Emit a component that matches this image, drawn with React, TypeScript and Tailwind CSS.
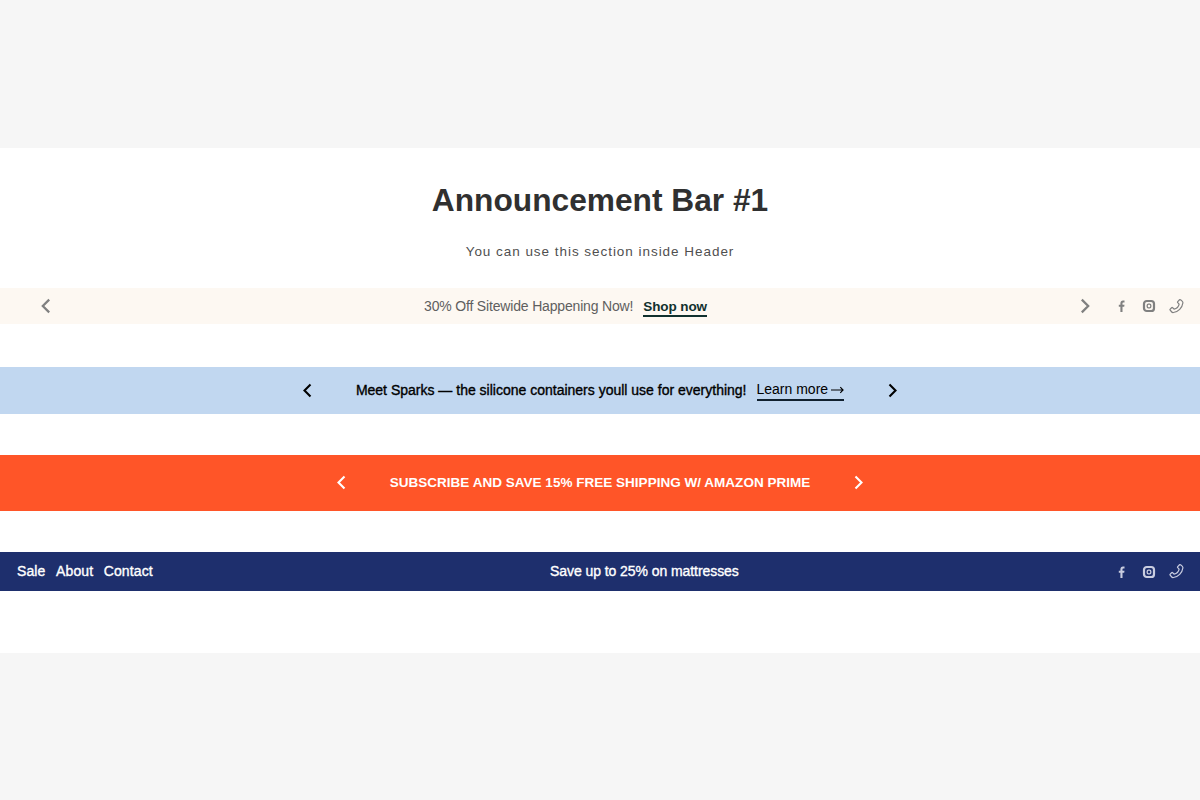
import React from "react";

function Chevron({ dir, className }: { dir: "l" | "r"; className: string }) {
  return (
    <svg viewBox="0 0 12 20" className={className} fill="none" stroke="currentColor" strokeWidth="2.800">
      <path d={dir === "l" ? "M10 2 2 10l8 8" : "M2 2l8 8-8 8"} />
    </svg>
  );
}

function Social({ color }: { color: string }) {
  return (
    <div className={`flex items-center gap-[13px] ${color}`}>
      <svg viewBox="0 0 14 14" className="w-[14px] h-[14px]" fill="currentColor">
        <path d="M5.400 13V7.800H3.800V5.700h1.600V4.200C5.400 2.500 6.400 1.400 8 1.400c.7 0 1.300.1 1.500.1v1.900h-1c-.8 0-1 .4-1 1v1.300h2l-.3 2.100H7.500V13z" />
      </svg>
      <svg viewBox="0 0 14 14" className="w-[14px] h-[14px]" fill="none" stroke="currentColor" strokeWidth="2.200">
        <rect x="2" y="2" width="10" height="10" rx="2.800" />
        <rect x="5.200" y="5.200" width="3.600" height="3.600" rx="1.200" strokeWidth="1.300" />
      </svg>
      <svg viewBox="0 0 16 16" className="w-[15px] h-[15px]" fill="none" stroke="currentColor" strokeWidth="1.300" strokeLinejoin="round">
        <path d="M10.800 1.300 9.300 2.800c-.3.300-.3.800 0 1.100l1.500 1.500c-.5 2.400-2.900 4.900-5.400 5.400L3.900 9.300c-.3-.3-.8-.3-1.100 0l-1.500 1.500c-.3.300-.3.800 0 1.100l1.400 1.700c.5.600 1.300.9 2 .8 5-.6 9.500-5.100 10.100-10.100.1-.7-.2-1.500-.8-2l-1.700-1.400c-.3-.3-.8-.3-1.300-.1z" />
      </svg>
    </div>
  );
}

export default function App() {
  return (
    <div className="min-h-[800px] bg-[#f6f6f6] pt-[148px] font-['Liberation_Sans',Arial,sans-serif]">
      <div className="bg-white h-[505px] flex flex-col">
        <div className="flex flex-col items-center pt-[33px] h-[140px]">
          <h1 className="text-[31.700px] leading-[38px] font-bold text-[#303030]">Announcement Bar #1</h1>
          <p className="mt-[24px] text-[13.500px] leading-[18px] tracking-[0.96px] text-[#4f4f4f]">You can use this section inside Header</p>
        </div>

        <div className="h-[36px] bg-[#fdf8f2] flex items-center pl-[40px] pr-[16px] text-[#808080]">
          <Chevron dir="l" className="w-[12px] h-[16px]" />
          <div className="flex-1 flex items-center justify-center gap-[10px] text-[14px] text-[#5f5f5f]">
            <span className="tracking-[-0.17px]">30% Off Sitewide Happening Now!</span>
            <span className="font-bold text-[13.500px] tracking-[-0.1px] text-[#10302e] border-b-2 border-[#10302e] leading-[17px] pt-[2px]">Shop now</span>
          </div>
          <Chevron dir="r" className="w-[12px] h-[16px] mr-[24px]" />
          <Social color="text-[#808080]" />
        </div>

        <div className="h-[43px]" />

        <div className="h-[47px] bg-[#c1d7f0] flex items-center justify-center text-black">
          <Chevron dir="l" className="w-[11px] h-[15px]" />
          <div className="flex items-center gap-[10px] text-[14px] mx-[43px]">
            <span className="[-webkit-text-stroke:0.35px_black]">Meet Sparks — the silicone containers youll use for everything!</span>
            <span className="flex items-center gap-[3px] border-b-2 border-[#10202e] leading-[19px]">
              Learn more
              <svg viewBox="0 0 14 10" className="w-[13px] h-[10px]" fill="none" stroke="currentColor" strokeWidth="1.200">
                <path d="M0 5h13M10 2l3 3-3 3" />
              </svg>
            </span>
          </div>
          <Chevron dir="r" className="w-[11px] h-[15px]" />
        </div>

        <div className="h-[41px]" />

        <div className="h-[56px] bg-[#ff5528] flex items-center justify-center text-white">
          <Chevron dir="l" className="w-[11px] h-[15px] mb-[1px]" />
          <span className="mx-[43px] text-[13.500px] tracking-[0.02px] font-bold">SUBSCRIBE AND SAVE 15% FREE SHIPPING W/ AMAZON PRIME</span>
          <Chevron dir="r" className="w-[11px] h-[15px] mb-[1px]" />
        </div>

        <div className="h-[41px]" />

        <div className="h-[39px] bg-[#1e2f6d] flex items-center pl-[17px] pr-[16px] text-white">
          <div className="flex gap-[10.500px] text-[14px] tracking-[0.12px] w-[533px] [-webkit-text-stroke:0.35px_white]">
            <span>Sale</span>
            <span>About</span>
            <span>Contact</span>
          </div>
          <span className="text-[14px] tracking-[-0.07px] [-webkit-text-stroke:0.35px_white]">Save up to 25% on mattresses</span>
          <div className="flex-1" />
          <Social color="text-[#c9cde0]" />
        </div>
      </div>
    </div>
  );
}
